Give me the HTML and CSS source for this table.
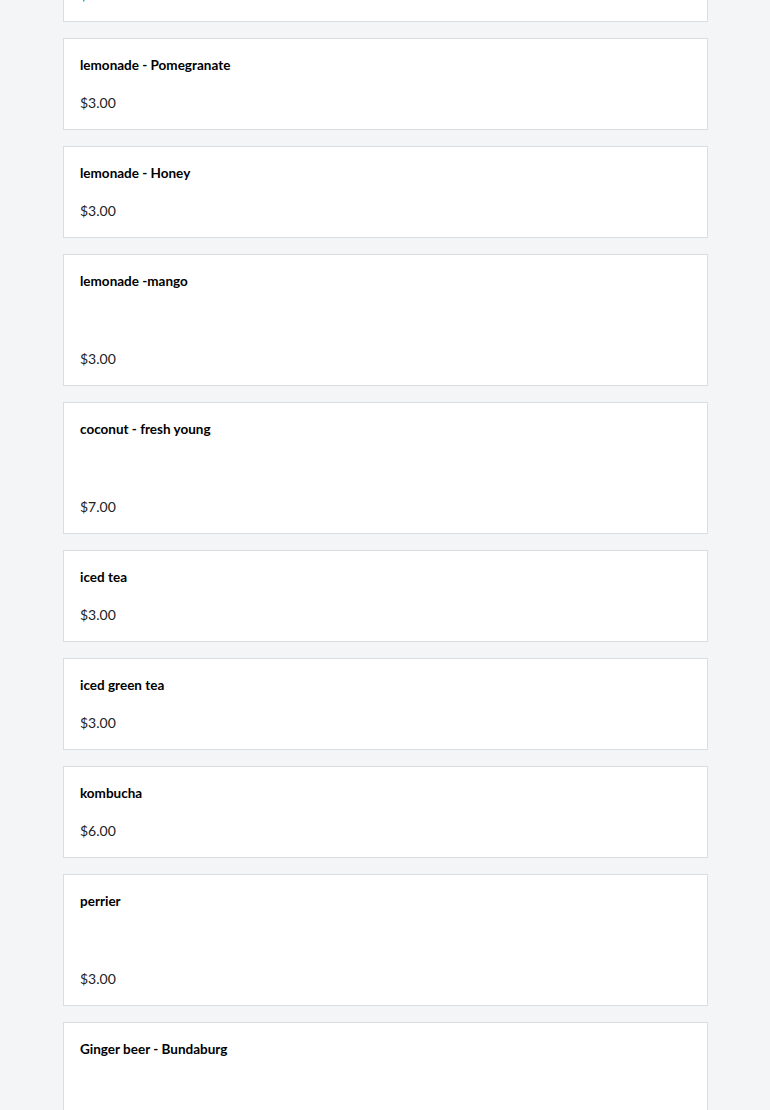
FILE: index.html
```html
<!DOCTYPE html>
<html>
<head>
<meta charset="utf-8">
<title>Menu - Drinks</title>
<link rel="stylesheet" href="styles.css">
</head>
<body>
<div class="menu-list">

<div class="item">
<div class="item-name">lemonade - Lime</div>
<div class="item-price">$3.00</div>
</div>

<div class="item">
<div class="item-name">lemonade - Pomegranate</div>
<div class="item-price">$3.00</div>
</div>

<div class="item">
<div class="item-name">lemonade - Honey</div>
<div class="item-price">$3.00</div>
</div>

<div class="item">
<div class="item-name">lemonade -mango</div>
<div class="item-desc"></div>
<div class="item-price">$3.00</div>
</div>

<div class="item">
<div class="item-name">coconut - fresh young</div>
<div class="item-desc"></div>
<div class="item-price">$7.00</div>
</div>

<div class="item">
<div class="item-name">iced tea</div>
<div class="item-price">$3.00</div>
</div>

<div class="item">
<div class="item-name">iced green tea</div>
<div class="item-price">$3.00</div>
</div>

<div class="item">
<div class="item-name">kombucha</div>
<div class="item-price">$6.00</div>
</div>

<div class="item">
<div class="item-name">perrier</div>
<div class="item-desc"></div>
<div class="item-price">$3.00</div>
</div>

<div class="item">
<div class="item-name">Ginger beer - Bundaburg</div>
<div class="item-desc"></div>
<div class="item-price">$3.00</div>
</div>

</div>
</body>
</html>
```
FILE: styles.css
```css
/* Menu item list */

body
{ margin: 0;
background-color: #f4f5f7;
font-family: Lato, "Open Sans", sans-serif;
font-size: 14px;
color: #111;
}

div.menu-list
{ width: 645px;
margin: -70px 0 0 63px;
display: flex;
flex-direction: column;
gap: 16px;
}

div.item
{ background-color: #fff;
border: 1px solid #dcdde0;
padding: 16px 16px 16px 16px;
display: flex;
flex-direction: column;
gap: 18px;
}

div.item-name
{ font-weight: bold;
font-size: 13.5px;
line-height: 20px;
color: #000;
}

div.item-desc
{ height: 22px;
}

div.item-price
{ line-height: 20px;
color: #222;
}
```
